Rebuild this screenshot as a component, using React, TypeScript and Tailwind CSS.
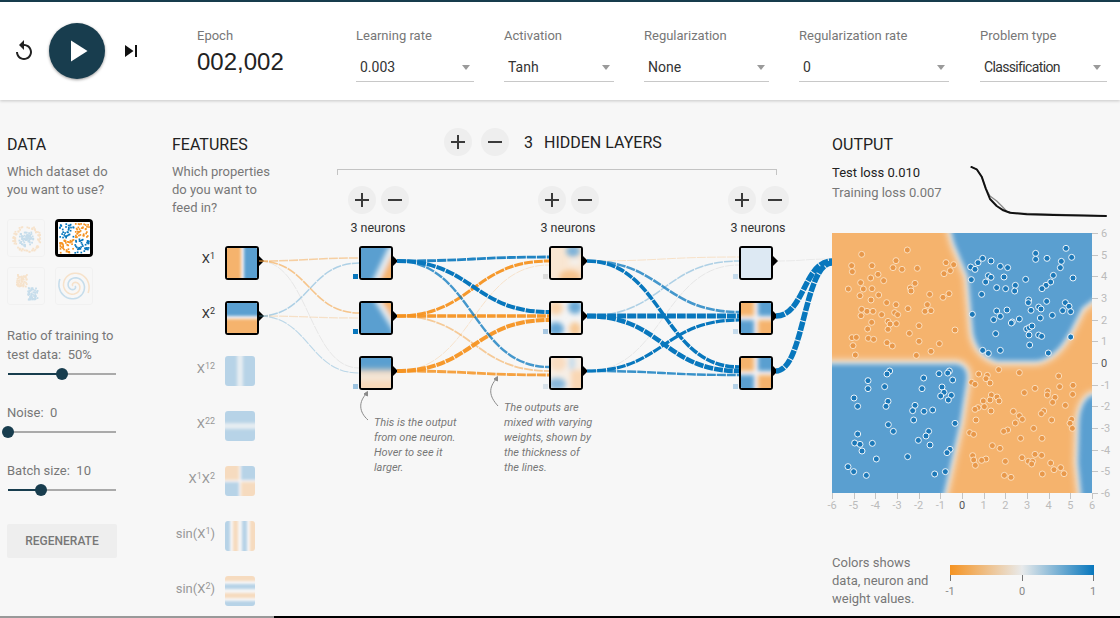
import React from "react";

const BLUE = "#0877bd";
const ORANGE = "#f59322";
const HB = "#5a9fd0";
const HO = "#f5b36d";

const TL = "125,403 262,390 95,437 97,455 156,437 228,422 219,443 246,448 292,445 378,428 401,434 391,452 372,461 174,463 152,474 191,482 122,488 285,490 271,504 273,513 85,507 130,507 156,506 120,527 176,525 329,523 387,521 369,532 153,540 200,548 228,554 322,554 125,568 141,574 159,574 264,566 315,574 333,572 123,587 185,584 224,578 233,584 155,607 204,604 210,612 229,611 297,617 143,627 204,628 405,630 268,640 96,653 109,652 145,655 161,658 297,664 201,668 217,678 99,677 358,671 333,694 106,705 289,706";
const TR = "738,385 647,400 647,418 681,415 755,412 724,424 488,415 474,428 513,423 452,441 465,448 541,439 563,443 721,443 505,467 513,472 552,471 700,466 759,474 454,479 497,486 617,478 692,486 678,496 666,506 586,496 530,503 557,506 584,513 485,523 626,540 625,548 680,544 736,548 747,559 656,561 663,567 633,571 561,570 530,573 728,572 752,575 457,583 541,589 521,599 697,586 661,594 598,597 577,606 574,609 620,627 628,623 636,618 527,641 627,645 656,645 665,649 752,651 629,675 488,691 505,700 541,691 685,699";
const BL = "209,33 201,42 388,33 383,39 357,41 311,54 398,60 144,62 144,86 194,80 306,86 366,81 372,97 102,114 362,108 394,106 385,120 204,124 198,139 113,139 285,136 278,152 312,154 338,150 281,180 205,194 405,190 220,214 113,222 326,214 318,228 295,241 104,249 120,253 157,250 330,255 126,273 390,268 381,278 263,290 169,297 84,320 101,335 139,346 344,342 376,335";
const BR = "536,29 598,38 476,42 502,46 498,56 716,48 510,69 455,67 465,73 719,80 759,76 645,85 613,98 683,94 682,105 514,105 531,111 705,112 758,103 510,120 490,123 537,123 698,127 736,136 474,143 493,140 465,148 513,153 580,154 671,153 664,161 598,167 607,178 586,189 468,180 695,180 755,178 750,190 757,205 641,205 563,210 551,214 449,218 461,223 602,235 666,235 517,257 540,265 645,283 665,286 458,287 461,300 498,297 485,301 466,316 606,293 625,304 638,304 635,312 556,304 692,309 702,329 722,323 732,341 667,342 553,346 573,352";

function pts(s: string, dy: number): [number, number][] {
  return s.split(" ").map((p) => {
    const [a, b] = p.split(",").map(Number);
    return [a / 3 - 12, b / 3 + dy] as [number, number];
  });
}

function Add() {
  return (
    <svg width="24" height="24" viewBox="0 0 24 24" fill="#3a3a3a">
      <path d="M19 13h-6v6h-2v-6H5v-2h6V5h2v6h6v2z" />
    </svg>
  );
}
function Remove() {
  return (
    <svg width="24" height="24" viewBox="0 0 24 24" fill="#3a3a3a">
      <path d="M19 13H5v-2h14v2z" />
    </svg>
  );
}
function PlusMinus({ gap }: { gap: string }) {
  return (
    <div className={`flex ${gap}`}>
      <div className="w-[28px] h-[28px] rounded-full bg-[#eeeeee] flex items-center justify-center">
        <Add />
      </div>
      <div className="w-[28px] h-[28px] rounded-full bg-[#eeeeee] flex items-center justify-center">
        <Remove />
      </div>
    </div>
  );
}

function Heat({ id, bg, blur = 1.5, children }: { id: string; bg: string; blur?: number; children?: React.ReactNode }) {
  return (
    <svg viewBox="0 0 30 30" className="block w-full h-full">
      <defs>
        <filter id={id} filterUnits="userSpaceOnUse" x="-10" y="-10" width="50" height="50">
          <feGaussianBlur stdDeviation={blur} />
        </filter>
      </defs>
      <rect width="30" height="30" fill={bg} />
      <g filter={`url(#${id})`}>{children}</g>
    </svg>
  );
}

const W = "#f4f4f4";

const heats: Record<string, React.ReactNode> = {
  x1: (
    <Heat id="hx1" bg={W} blur={1.4}>
      <rect x="-6" y="-6" width="20" height="42" fill={HO} />
      <rect x="17" y="-6" width="20" height="42" fill={HB} />
    </Heat>
  ),
  x2: (
    <Heat id="hx2" bg={W} blur={1.4}>
      <rect x="-6" y="-6" width="42" height="19" fill={HB} />
      <rect x="-6" y="16" width="42" height="20" fill={HO} />
    </Heat>
  ),
  x1s: (
    <Heat id="hx1s" bg={HB} blur={1.4}>
      <rect x="12" y="-6" width="6" height="42" fill="#f3f3f3" opacity=".75" />
    </Heat>
  ),
  x2s: (
    <Heat id="hx2s" bg={HB} blur={1.4}>
      <rect x="-6" y="12" width="42" height="6" fill="#f3f3f3" opacity=".75" />
    </Heat>
  ),
  x1x2: (
    <Heat id="hxx" bg={W} blur={1.6}>
      <rect x="-6" y="-6" width="20" height="20" fill={HO} />
      <rect x="16" y="-6" width="20" height="20" fill={HB} />
      <rect x="-6" y="16" width="20" height="20" fill={HB} />
      <rect x="16" y="16" width="20" height="20" fill={HO} />
    </Heat>
  ),
  sin1: (
    <Heat id="hs1" bg={W} blur={1.1}>
      <rect x="-6" y="-6" width="11" height="42" fill={HB} />
      <rect x="8" y="-6" width="5" height="42" fill={HO} />
      <rect x="17" y="-6" width="5" height="42" fill={HB} />
      <rect x="25" y="-6" width="11" height="42" fill={HO} />
    </Heat>
  ),
  sin2: (
    <Heat id="hs2" bg={W} blur={1.1}>
      <rect x="-6" y="-6" width="42" height="11" fill={HO} />
      <rect x="-6" y="8" width="42" height="5" fill={HB} />
      <rect x="-6" y="17" width="42" height="5" fill={HO} />
      <rect x="-6" y="25" width="42" height="11" fill={HB} />
    </Heat>
  ),
  a1: (
    <Heat id="ha1" bg={HB} blur={2.4}>
      <polygon points="28,-2 36,-2 36,36 10,36" fill="#e6edf2" />
      <polygon points="31,7 36,7 36,36 17,36" fill={HO} />
    </Heat>
  ),
  a2: (
    <Heat id="ha2" bg={HB} blur={2.4}>
      <polygon points="11,-6 36,-6 36,34" fill="#e6edf2" />
      <polygon points="18,-6 36,-6 36,24" fill={HO} />
    </Heat>
  ),
  a3: (
    <Heat id="ha3" bg="#f8d9b9" blur={3}>
      <rect x="-8" y="-8" width="46" height="20" fill={HB} />
      <rect x="-8" y="17" width="46" height="4" fill="#eff1f2" />
    </Heat>
  ),
  b1: (
    <Heat id="hb1" bg="#f9e6d2" blur={2.6}>
      <ellipse cx="22" cy="3" rx="7" ry="6" fill="#7fb3d9" />
      <ellipse cx="19" cy="29" rx="11" ry="7" fill="#f7c48f" />
      <ellipse cx="24" cy="14" rx="7" ry="3" fill="#f3f1ee" />
    </Heat>
  ),
  b2: (
    <Heat id="hb2" bg={W} blur={2.4}>
      <ellipse cx="5" cy="5" rx="7" ry="7" fill="#f8d2aa" />
      <ellipse cx="24" cy="4" rx="7" ry="7" fill="#6aa9d5" />
      <ellipse cx="5" cy="26" rx="8" ry="7" fill="#66a6d4" />
      <ellipse cx="24" cy="26" rx="6" ry="7" fill="#f7c996" />
    </Heat>
  ),
  b3: (
    <Heat id="hb3" bg="#f6eee6" blur={2.6}>
      <ellipse cx="7" cy="5" rx="8" ry="8" fill="#f9dcc0" />
      <ellipse cx="21" cy="5" rx="3" ry="8" fill="#c5dbec" />
      <ellipse cx="6" cy="26" rx="9" ry="6" fill="#86b7dc" />
      <rect x="20" y="12" width="16" height="24" fill="#f9d7b4" />
    </Heat>
  ),
  c1: <Heat id="hc1" bg="#dde9f3" />,
  c2: (
    <Heat id="hc2" bg={W} blur={2.2}>
      <rect x="-6" y="-6" width="19" height="19" fill={HO} />
      <rect x="17" y="-6" width="19" height="19" fill={HB} />
      <rect x="-6" y="17" width="19" height="19" fill={HB} />
      <rect x="17" y="17" width="19" height="19" fill={HO} />
    </Heat>
  ),
  c3: (
    <Heat id="hc3" bg={W} blur={2.2}>
      <rect x="-6" y="-6" width="19" height="19" fill={HO} />
      <rect x="17" y="-6" width="19" height="19" fill={HB} />
      <rect x="-6" y="17" width="19" height="19" fill={HB} />
      <rect x="17" y="17" width="19" height="19" fill={HO} />
    </Heat>
  ),
};

function Node({ h, bias, biasLeft = "left-[-6px]" }: { h: string; bias?: string; biasLeft?: string }) {
  return (
    <div className="relative w-[34px] h-[34px]">
      <div className="w-full h-full border-2 border-black rounded-[3px] overflow-hidden">{heats[h]}</div>
      <div className="absolute left-[34px] top-[10px] w-0 h-0 border-y-[5px] border-y-transparent border-l-[5px] border-l-black" />
      {bias && <div className={`absolute ${biasLeft} top-[28px] w-[5px] h-[5px]`} style={{ background: bias }} />}
    </div>
  );
}

const Sup = ({ children }: { children: React.ReactNode }) => (
  <span className="text-[9px] relative top-[-2px]">{children}</span>
);

const features: { label: React.ReactNode; h: string; on?: boolean }[] = [
  { label: <>X<Sup>1</Sup></>, h: "x1", on: true },
  { label: <>X<Sup>2</Sup></>, h: "x2", on: true },
  { label: <>X<Sup>1</Sup><Sup>2</Sup></>, h: "x1s" },
  { label: <>X<Sup>2</Sup><Sup>2</Sup></>, h: "x2s" },
  { label: <>X<Sup>1</Sup>X<Sup>2</Sup></>, h: "x1x2" },
  { label: <>sin(X<Sup>1</Sup>)</>, h: "sin1" },
  { label: <>sin(X<Sup>2</Sup>)</>, h: "sin2" },
];

type L = [number, number, number, number, string, number, number];
const links: L[] = [
  [259, 261, 359, 258, ORANGE, 1.6, 0.4],
  [259, 316, 359, 263, BLUE, 1.5, 0.3],
  [259, 261, 359, 313, ORANGE, 1.6, 0.5],
  [259, 316, 359, 318, ORANGE, 1.2, 0.22],
  [259, 261, 359, 368, "#999999", 1, 0.18],
  [259, 316, 359, 373, BLUE, 1.1, 0.25],

  [397, 261, 549, 257, BLUE, 2.8, 0.9],
  [397, 316, 549, 261, ORANGE, 3, 0.95],
  [397, 371, 549, 265, ORANGE, 1, 0.2],
  [397, 261, 549, 312, BLUE, 4, 1],
  [397, 316, 549, 316, ORANGE, 3.6, 0.95],
  [397, 371, 549, 320, ORANGE, 4, 0.95],
  [397, 261, 549, 367, BLUE, 2.4, 0.75],
  [397, 316, 549, 371, ORANGE, 1.8, 0.45],
  [397, 371, 549, 375, ORANGE, 2.8, 0.85],

  [587, 261, 739, 257, ORANGE, 1, 0.22],
  [587, 316, 739, 261, BLUE, 1.5, 0.3],
  [587, 371, 739, 265, "#999999", 1, 0.18],
  [587, 261, 739, 312, BLUE, 2.6, 0.75],
  [587, 316, 739, 316, BLUE, 5, 1],
  [587, 371, 739, 320, BLUE, 3.2, 1],
  [587, 261, 739, 367, BLUE, 3.6, 1],
  [587, 316, 739, 371, BLUE, 4.6, 1],
  [587, 371, 739, 375, BLUE, 2.4, 0.8],

  [776, 261, 832, 259, "#999999", 1, 0.15],
  [776, 316, 832, 261, BLUE, 5.5, 1],
  [776, 371, 832, 263, BLUE, 5.5, 1],
];

function Links() {
  return (
    <svg width="1120" height="618" className="absolute left-0 top-0 pointer-events-none" fill="none">
      {links.map(([x0, y0, x1, y1, c, w, o], i) => {
        const m = (x0 + x1) / 2;
        return (
          <path
            key={i}
            d={`M${x0},${y0} C${m},${y0} ${m},${y1} ${x1},${y1}`}
            stroke={c}
            strokeWidth={w}
            strokeOpacity={o}
            strokeDasharray="9 1"
          />
        );
      })}
      <g stroke="#8a8a8a" strokeWidth="1">
        <path d="M368,420 C359,412 358,402 367,393" />
        <path d="M364,394 L367.5,391.5 L367.5,396 Z" fill="#8a8a8a" />
        <path d="M498,406 C489,396 488,388 497,378" />
        <path d="M494,379 L497.5,376.5 L497.5,381 Z" fill="#8a8a8a" />
      </g>
    </svg>
  );
}

function rng(seed: number) {
  let s = seed;
  return () => {
    s = (s * 16807) % 2147483647;
    return s / 2147483647;
  };
}

function XorThumb() {
  const r = rng(77);
  const dots = Array.from({ length: 170 }, () => {
    const x = 1 + r() * 31;
    const y = 1 + r() * 31;
    const same = x < 16.5 === y < 16.5;
    return [x, y, same ? BLUE : ORANGE, Math.abs(x - 16.5) < 0.8 || Math.abs(y - 16.5) < 0.8] as const;
  });
  return (
    <svg viewBox="0 0 34 34" className="block w-full h-full bg-white">
      {dots.map(([x, y, c, skip], i) => (!skip ? <rect key={i} x={x} y={y} width="1.8" height="1.8" fill={c} /> : null))}
    </svg>
  );
}
function CircleThumb() {
  const r = rng(11);
  const dots = Array.from({ length: 150 }, (_, i) => {
    const t = r() * Math.PI * 2;
    const inner = i % 2 === 0;
    const d = inner ? r() * 8 : 11 + r() * 3;
    return [18 + Math.cos(t) * d, 18 + Math.sin(t) * d, inner ? BLUE : ORANGE] as const;
  });
  return (
    <svg viewBox="0 0 36 36" className="block w-full h-full">
      {dots.map(([x, y, c], i) => (
        <rect key={i} x={x} y={y} width="1.8" height="1.8" fill={c} />
      ))}
    </svg>
  );
}
function GaussThumb() {
  const r = rng(29);
  const dots = Array.from({ length: 110 }, (_, i) => {
    const o = i % 2 === 0;
    const cx = o ? 13 : 24;
    const cy = o ? 12 : 25;
    return [cx + (r() - 0.5) * 10, cy + (r() - 0.5) * 12, o ? ORANGE : BLUE] as const;
  });
  return (
    <svg viewBox="0 0 36 36" className="block w-full h-full">
      {dots.map(([x, y, c], i) => (
        <rect key={i} x={x} y={y} width="1.8" height="1.8" fill={c} />
      ))}
    </svg>
  );
}
function SpiralThumb() {
  const sp = (off: number) => {
    let d = "";
    for (let i = 0; i < 60; i++) {
      const t = (i / 60) * Math.PI * 3.2;
      const rad = 1 + (i / 60) * 15;
      d += `${i ? "L" : "M"}${(18 + Math.cos(t + off) * rad).toFixed(1)},${(18 + Math.sin(t + off) * rad).toFixed(1)} `;
    }
    return d;
  };
  return (
    <svg viewBox="0 0 36 36" className="block w-full h-full" fill="none">
      <path d={sp(0)} stroke={BLUE} strokeWidth="1.6" />
      <path d={sp(Math.PI)} stroke={ORANGE} strokeWidth="1.6" />
    </svg>
  );
}

function Slider({ x }: { x: number }) {
  return (
    <div className="relative h-[2px] w-[108px] ml-px bg-[#aaaaaa]">
      <div className="absolute left-0 top-0 h-[2px] bg-[#183d4e]" style={{ width: x }} />
      <div
        className="absolute top-[-5px] w-[12px] h-[12px] rounded-full bg-[#183d4e]"
        style={{ left: x - 6 }}
      />
    </div>
  );
}

function Select({ label, value, cls, arrow, valueCls = "" }: { label: string; value: string; cls: string; arrow: string; valueCls?: string }) {
  return (
    <div className={`flex flex-col ${cls}`}>
      <div className="text-[13px] leading-[16px] text-[#777777] whitespace-nowrap">{label}</div>
      <div className="h-[38px] border-b border-[#c8c8c8] pt-[9px] pl-[4px] flex items-center justify-between">
        <span className={`text-[14px] text-[#333333] ${valueCls}`}>{value}</span>
        <span className={`w-0 h-0 border-x-[4.5px] border-x-transparent border-t-[5px] border-t-[#9a9a9a] ${arrow}`} />
      </div>
    </div>
  );
}

function OutputHeat() {
  const ticks = [6, 5, 4, 3, 2, 1, 0, -1, -2, -3, -4, -5, -6];
  const tr = "M117,-10 L122,10 L136,44 L141,100 Q145,122 165,128 L205,128 Q225,125 240,95 L250,75 L270,60 L270,-10 Z";
  const bl = "M-10,131 L125,131 Q135,133 135,145 L128,190 L110,270 L-10,270 Z";
  const br = "M270,160 L258,163 Q248,170 247,190 L246,230 L250,270 L270,270 Z";
  return (
    <svg width="288" height="280" className="block overflow-visible">
      <defs>
        <clipPath id="hc">
          <rect width="260" height="260" />
        </clipPath>
        <filter id="bw" filterUnits="userSpaceOnUse" x="-30" y="-30" width="330" height="330">
          <feGaussianBlur stdDeviation="3.5" />
        </filter>
        <filter id="bb" filterUnits="userSpaceOnUse" x="-30" y="-30" width="330" height="330">
          <feGaussianBlur stdDeviation="2.8" />
        </filter>
      </defs>
      <g clipPath="url(#hc)">
        <rect width="260" height="260" fill={HO} />
        <g filter="url(#bw)" fill="#f2f2f2" stroke="#f2f2f2" strokeWidth="7">
          <path d={tr} />
          <path d={bl} />
          <path d={br} />
        </g>
        <g filter="url(#bb)" fill={HB}>
          <path d={tr} />
          <path d={bl} />
          <path d={br} />
        </g>
      </g>
      <g stroke="#fce3c6" strokeOpacity=".9" strokeWidth="1">
        {pts(TL, -113).concat(pts(BR, 127)).map(([x, y], i) => (
          <circle key={i} cx={x} cy={y} r="3" fill="#e8984a" />
        ))}
      </g>
      <g stroke="#ffffff" strokeOpacity=".9" strokeWidth="1">
        {pts(TR, -113).concat(pts(BL, 127)).map(([x, y], i) => (
          <circle key={i} cx={x} cy={y} r="3" fill="#1c78b8" />
        ))}
      </g>
      <g stroke="#c4c4c4" strokeWidth="1">
        {ticks.map((t) => {
          const p = Math.round(((6 - t) * 260) / 12) + 0.5;
          return <path key={`y${t}`} d={`M260,${p} H266`} />;
        })}
        {ticks.map((t) => {
          const p = Math.round(((t + 6) * 260) / 12) + 0.5;
          return <path key={`x${t}`} d={`M${p},260 V266`} />;
        })}
      </g>
      <g fontSize="11" fontFamily="Roboto, sans-serif">
        {ticks.map((t) => (
          <text key={`ly${t}`} x="269" y={((6 - t) * 260) / 12 + 4} fill={t === 0 ? "#555555" : "#bbbbbb"}>
            {t}
          </text>
        ))}
        {ticks.map((t) => (
          <text key={`lx${t}`} x={((t + 6) * 260) / 12} y="276" textAnchor="middle" fill={t === 0 ? "#555555" : "#bbbbbb"}>
            {t}
          </text>
        ))}
      </g>
    </svg>
  );
}

function LossChart() {
  const map = (a: [number, number][]) =>
    a.map(([x, y], i) => `${i ? "L" : "M"}${(x / 3 + 820 - 970).toFixed(1)},${(y / 3 + 120 - 166).toFixed(1)}`).join(" ");
  return (
    <svg width="138" height="52" className="block" fill="none" strokeLinejoin="round">
      <path
        d={map([[452, 140], [470, 148], [485, 170], [497, 205], [510, 228], [530, 243], [545, 258], [560, 274], [580, 279], [860, 288]])}
        stroke="#8a8a8a"
        strokeWidth="1.3"
      />
      <path
        d={map([[452, 140], [470, 148], [485, 170], [497, 205], [510, 237], [530, 258], [550, 271], [570, 278], [620, 283], [700, 285], [860, 288]])}
        stroke="#111111"
        strokeWidth="2"
      />
    </svg>
  );
}

export default function App() {
  return (
    <div className="relative w-[1120px] h-[618px] overflow-hidden bg-[#f7f7f7] flex flex-col [font-family:Roboto,sans-serif]">
      <div className="h-[2px] bg-[#183d4e]" />
      <header className="relative z-20 h-[98px] bg-white shadow-[0_1px_3px_rgba(0,0,0,0.2)] flex items-start">
        <div className="w-[197px] h-full flex items-center">
          <svg className="ml-[12px]" width="24" height="24" viewBox="0 0 24 24" fill="#222222">
            <path d="M12 5V1L7 6l5 5V7c3.31 0 6 2.69 6 6s-2.69 6-6 6-6-2.69-6-6H4c0 4.42 3.58 8 8 8s8-3.58 8-8-3.58-8-8-8z" />
          </svg>
          <div className="ml-[13px] w-[56px] h-[56px] rounded-full bg-[#183d4e] shadow-[0_1px_3px_rgba(0,0,0,0.4)] flex items-center justify-center">
            <svg width="36" height="36" viewBox="0 0 24 24" fill="#ffffff">
              <path d="M8 5v14l11-7z" />
            </svg>
          </div>
          <svg className="ml-[14px]" width="24" height="24" viewBox="0 0 24 24" fill="#111111">
            <path d="M6 18l8.5-6L6 6v12zM16 6v12h2V6h-2z" />
          </svg>
        </div>
        <div className="w-[159px] pt-[26px]">
          <div className="text-[13px] leading-[16px] text-[#777777]">Epoch</div>
          <div className="mt-[3px] text-[24px] leading-[30px] text-[#222222] [font-family:'Liberation_Sans',sans-serif]">002,002</div>
        </div>
        <div className="flex pt-[26px]">
          <Select label="Learning rate" value="0.003" cls="w-[118px] mr-[30px]" arrow="mr-[4px]" />
          <Select label="Activation" value="Tanh" cls="w-[110px] mr-[30px]" arrow="mr-[4px]" />
          <Select label="Regularization" value="None" cls="w-[125px] mr-[30px]" arrow="mr-[4px]" />
          <Select label="Regularization rate" value="0" cls="w-[150px] mr-[31px]" arrow="mr-[4px]" />
          <Select label="Problem type" value="Classification" cls="w-[127px]" arrow="mr-[6px]" valueCls="tracking-[-0.65px]" />
        </div>
      </header>

      <main className="relative h-[516px] flex overflow-hidden">
        <section className="w-[172px] shrink-0 pl-[7px] pt-[35px]">
          <h4 className="text-[16px] leading-[20px] text-[#222222]">DATA</h4>
          <p className="mt-[8px] text-[13px] leading-[18px] text-[#777777] whitespace-nowrap">
            Which dataset do
            <br />
            you want to use?
          </p>
          <div className="mt-[20px] grid grid-cols-[38px_38px] gap-x-[10px] gap-y-[10px] w-[86px]">
            <div className="h-[38px] opacity-20 border border-[#dddddd] rounded-[3px] overflow-hidden"><CircleThumb /></div>
            <div className="h-[38px] border-[3px] border-black rounded-[4px] overflow-hidden"><XorThumb /></div>
            <div className="h-[38px] opacity-20 border border-[#dddddd] rounded-[3px] overflow-hidden"><GaussThumb /></div>
            <div className="h-[38px] opacity-20 border border-[#dddddd] rounded-[3px] overflow-hidden"><SpiralThumb /></div>
          </div>
          <p className="mt-[21px] text-[13px] leading-[19px] text-[#777777] whitespace-pre">Ratio of training to{"\n"}test data:  50%</p>
          <div className="mt-[9px]"><Slider x={54} /></div>
          <p className="mt-[29px] text-[13px] leading-[18px] text-[#777777] whitespace-pre">Noise:  0</p>
          <div className="mt-[9px]"><Slider x={0} /></div>
          <p className="mt-[29px] text-[13px] leading-[18px] text-[#777777] whitespace-pre">Batch size:  10</p>
          <div className="mt-[9px]"><Slider x={33} /></div>
          <div className="mt-[33px] w-[110px] h-[34px] bg-[#eeeeee] rounded-[2px] flex items-center justify-center text-[12px] font-medium text-[#777777]">REGENERATE</div>
        </section>

        <section className="w-[88px] shrink-0 pt-[35px]">
          <h4 className="text-[16px] leading-[20px] text-[#222222]">FEATURES</h4>
          <p className="mt-[8px] text-[13px] leading-[18px] text-[#777777] whitespace-nowrap">
            Which properties
            <br />
            do you want to
            <br />
            feed in?
          </p>
          <div className="mt-[29px] pl-[53px]">
            {features.map((f) => (
              <div key={f.h} className="relative h-[55px] w-[34px]">
                <div className={`absolute right-[44px] top-0 h-[26px] flex items-center text-[13px] whitespace-nowrap ${f.on ? "text-[#333333]" : "text-[#999999]"}`}>
                  {f.label}
                </div>
                {f.on ? (
                  <Node h={f.h} />
                ) : (
                  <div className="w-[30px] h-[30px] rounded-[3px] overflow-hidden opacity-40">{heats[f.h]}</div>
                )}
              </div>
            ))}
          </div>
        </section>

        <section className="w-[572px] shrink-0 pt-[28px]">
          <div className="pl-[184px] flex items-center h-[28px]">
            <PlusMinus gap="gap-[9px]" />
            <span className="ml-[15px] mt-[1px] text-[16px] text-[#222222]">3</span>
            <span className="ml-[11px] mt-[1px] text-[16px] text-[#222222]">HIDDEN LAYERS</span>
          </div>
          <div className="ml-[77px] mt-[13px] w-[440px] h-[6px] border-t border-x border-[#c4c4c4]" />
          <div className="ml-[87px] mt-[11px] flex gap-[128px]">
            {[
              [["a1", BLUE], ["a2", BLUE], ["a3", "#9cc3e0"]],
              [["b1", "#dddddd"], ["b2", "#a8c8e2"], ["b3", "#d8e2ea"]],
              [["c1", "#c5dbec"], ["c2", "#c5dbec"], ["c3", "#b5d2e8"]],
            ].map((col, ci) => (
              <div key={ci} className="w-[62px] flex flex-col items-center">
                <PlusMinus gap="gap-[5px]" />
                <div className="mt-[4px] h-[20px] flex items-center text-[12.5px] text-[#333333] whitespace-nowrap">3 neurons</div>
                <div className="mt-[8px] self-start ml-[12px] flex flex-col gap-[21px]">
                  {col.map(([h, b]) => (
                    <Node key={h} h={h} bias={b} />
                  ))}
                </div>
              </div>
            ))}
          </div>
        </section>

        <section className="w-[288px] shrink-0 pt-[35px]">
          <h4 className="text-[16px] leading-[20px] text-[#222222]">OUTPUT</h4>
          <div className="mt-[8px] h-[70px] flex items-start">
            <div className="w-[138px] text-[13px] leading-[20px]">
              <div className="text-[#222222]">Test loss 0.010</div>
              <div className="text-[#777777]">Training loss 0.007</div>
            </div>
            <div className="mt-[3px]"><LossChart /></div>
          </div>
          <OutputHeat />
          <div className="mt-[41px] flex items-start">
            <p className="w-[118px] text-[13px] leading-[18px] text-[#777777]">
              Colors shows
              <br />
              data, neuron and
              <br />
              weight values.
            </p>
            <svg width="150" height="44" className="block mt-[11px] overflow-visible">
              <defs>
                <linearGradient id="lg">
                  <stop offset="0" stopColor={ORANGE} />
                  <stop offset=".5" stopColor="#e8eaeb" />
                  <stop offset="1" stopColor={BLUE} />
                </linearGradient>
              </defs>
              <rect width="144" height="10" fill="url(#lg)" />
              <path d="M0.5,10 V16 M72.5,10 V16 M143.5,10 V16" stroke="#777777" />
              <g fontSize="11" fill="#888888" fontFamily="Roboto, sans-serif" textAnchor="middle">
                <text x="0" y="30">-1</text>
                <text x="72" y="30">0</text>
                <text x="143" y="30">1</text>
              </g>
            </svg>
          </div>
        </section>

        <div className="absolute left-[374px] top-[315px] text-[11px] leading-[15px] italic text-[#777777] whitespace-nowrap">
          This is the output
          <br />
          from one neuron.
          <br />
          Hover to see it
          <br />
          larger.
        </div>
        <div className="absolute left-[504px] top-[300px] text-[11px] leading-[15px] italic text-[#777777] whitespace-nowrap">
          The outputs are
          <br />
          mixed with varying
          <br />
          weights, shown by
          <br />
          the thickness of
          <br />
          the lines.
        </div>
      </main>
      <div className="h-[2px] flex">
        <div className="w-[274px] bg-[#999999]" />
        <div className="flex-1 bg-black" />
      </div>
      <Links />
    </div>
  );
}
